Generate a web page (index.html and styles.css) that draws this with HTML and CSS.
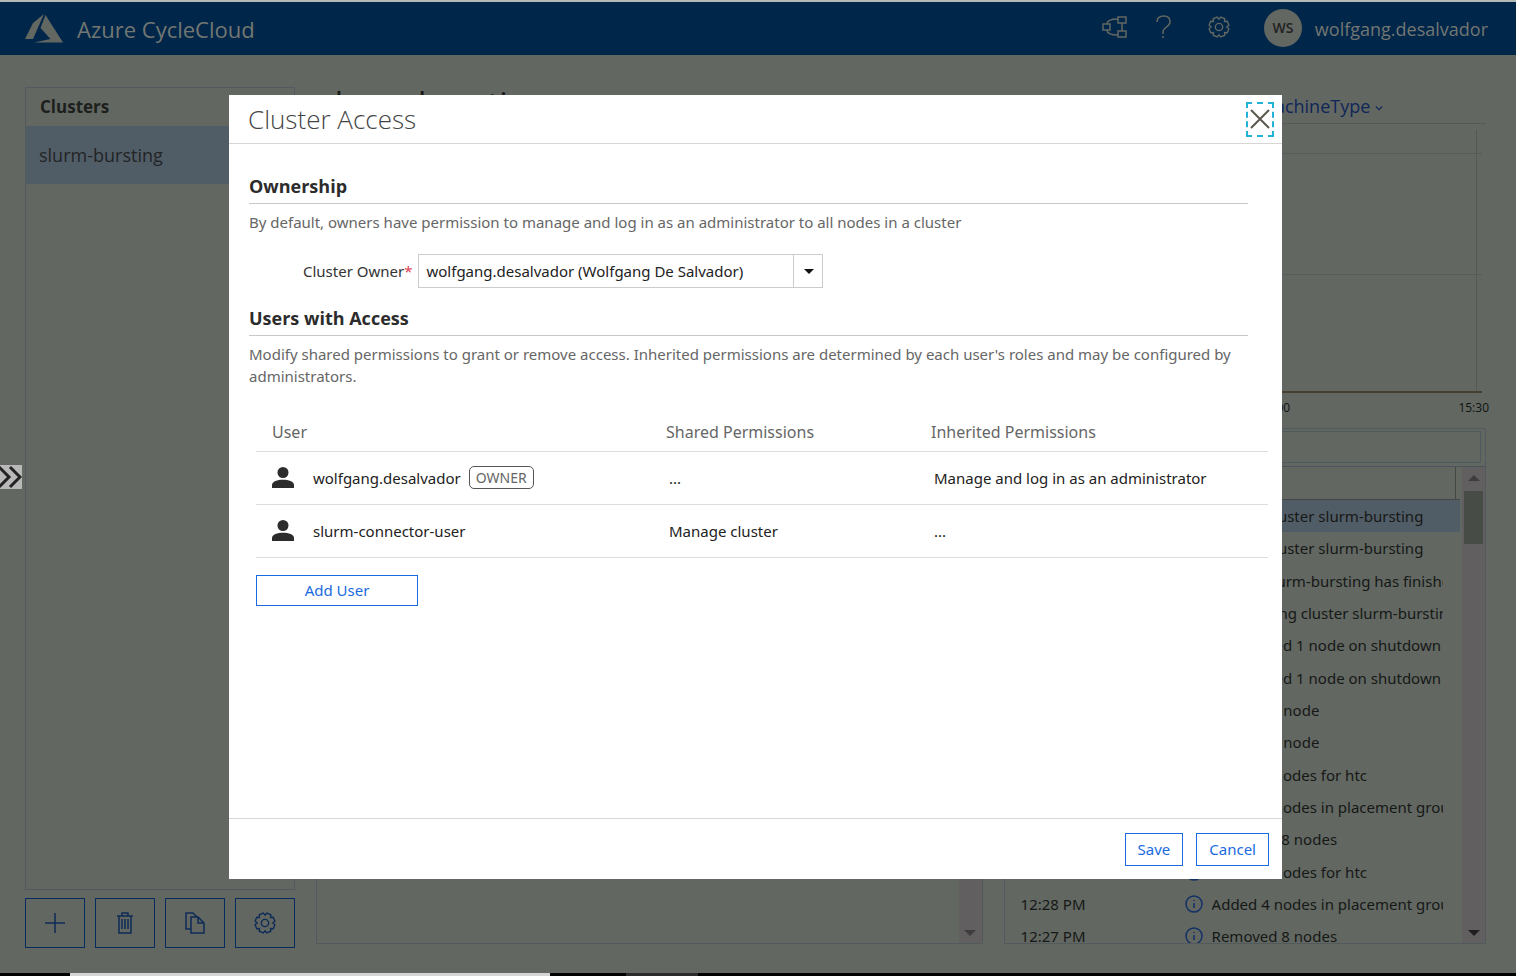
FILE: index.html
```html
<!DOCTYPE html>
<html lang="en">
<head>
<meta charset="utf-8">
<title>Azure CycleCloud</title>
<link rel="stylesheet" href="styles.css">
</head>
<body>
<div class="page">
  <header class="topbar">
    <svg class="logo" viewBox="0 0 38 30" aria-hidden="true"><path d="M19 0 8 9 0 25h8zM20.500 1 15.500 14l10 11L9 28.500h29z"/></svg>
    <span class="brand">Azure CycleCloud</span>
    <nav class="tools">
      <button class="tool" aria-label="Network"><svg viewBox="0 0 25 22" width="25" height="22"><path d="M1 8h7v6H1zM16 1h8v6h-8zM16 15h8v6h-8zM5 8c0-3 3-5 11-5M5 14c0 3 3 5 11 5M20 7v8"/></svg></button>
      <button class="tool" aria-label="Help"><svg viewBox="0 0 16 24" width="16" height="24"><path d="M1 7c0-4 3-6 7-6s6 2 6 6c0 5-7 5-7 10v2M7 21v2"/></svg></button>
      <button class="tool gear" aria-label="Settings"><svg viewBox="0 0 24 24" width="22" height="22"><use href="#gear"/></svg></button>
    </nav>
    <span class="avatar">WS</span>
    <a class="account" href="#">wolfgang.desalvador</a>
  </header>

  <main class="content">
    <section class="clusters">
      <div class="cluster-list">
        <h2 class="cluster-title">Clusters</h2>
        <a class="cluster-item" href="#">slurm-bursting</a>
      </div>
      <div class="cluster-actions">
        <button class="action" aria-label="Add"><svg viewBox="0 0 24 24" width="24" height="24"><path d="M12 2v20M2 12h20"/></svg></button>
        <button class="action" aria-label="Delete"><svg viewBox="0 0 24 24" width="24" height="24"><path d="M4 5h16M6 5v17h12V5M9 5V2h6v3M9 8v10M12 8v10M15 8v10"/></svg></button>
        <button class="action" aria-label="Copy"><svg viewBox="0 0 24 24" width="24" height="24"><path d="M8 18H3V2h7l4 4M8 6h7l6 6v10H8zM15 6v6h6"/></svg></button>
        <button class="action" aria-label="Settings"><svg viewBox="0 0 24 24" width="22" height="22"><use href="#gear"/></svg></button>
      </div>
    </section>

    <section class="details">
      <h1 class="details-title">slurm-bursting</h1>
      <div class="details-panel"><div class="scroll"><span class="arrow down dim"></span></div></div>
    </section>

    <section class="activity">
      <div class="chart-head"><a class="chart-link" href="#">Cores by MachineType <svg viewBox="0 0 10 6" width="8" height="6"><path d="M1 1l4 4 4-4"/></svg></a></div>
      <div class="chart"><div class="gridline"></div></div>
      <div class="chart-labels"><span>15:00</span><span>15:30</span></div>
      <div class="events">
        <div class="events-search"><input class="search" type="text" aria-label="Search events"></div>
        <div class="events-body">
          <div class="events-main">
            <div class="events-head"></div>
            <ul class="rows" id="rows"></ul>
          </div>
          <div class="scroll"><span class="arrow up dim"></span><span class="thumb"></span><span class="arrow down"></span></div>
        </div>
      </div>
    </section>
  </main>
  <div class="taskbar"><span class="task-gap"></span><span class="task-search"></span><span class="task-space"></span><span class="task-item"></span></div>
</div>

<button class="expander" aria-label="Expand"><svg viewBox="0 0 22 24" width="22" height="24"><path d="M-1 2l10 10-10 10M10 2l10 10-10 10"/></svg></button>

<div class="overlay">
  <div class="modal" role="dialog" aria-labelledby="dialog-title">
    <div class="modal-head">
      <h2 class="modal-title" id="dialog-title">Cluster Access</h2>
      <button class="close" aria-label="Close"><svg viewBox="0 0 20 20" width="20" height="20"><path d="M1 1l18 18M19 1L1 19"/></svg></button>
    </div>
    <div class="modal-body">
      <h3 class="section-title">Ownership</h3>
      <p class="hint">By default, owners have permission to manage and log in as an administrator to all nodes in a cluster</p>
      <div class="field">
        <label class="label" for="owner">Cluster Owner<span class="required">*</span></label>
        <div class="select-box">
          <select class="select" id="owner"><option>wolfgang.desalvador (Wolfgang De Salvador)</option></select>
          <span class="select-arrow"></span>
        </div>
      </div>
      <h3 class="section-title">Users with Access</h3>
      <p class="hint">Modify shared permissions to grant or remove access. Inherited permissions are determined by each user's roles and may be configured by administrators.</p>
      <table class="users">
        <thead><tr><th class="col-user">User</th><th class="col-shared">Shared Permissions</th><th>Inherited Permissions</th></tr></thead>
        <tbody>
          <tr><td><div class="user"><svg class="person" viewBox="0 0 22 22"><circle cx="11" cy="5.500" r="5.500"/><path d="M0 21v-3c0-7 22-7 22 0v3z"/></svg>wolfgang.desalvador<span class="badge">OWNER</span></div></td><td>...</td><td>Manage and log in as an administrator</td></tr>
          <tr><td><div class="user"><svg class="person" viewBox="0 0 22 22"><circle cx="11" cy="5.500" r="5.500"/><path d="M0 21v-3c0-7 22-7 22 0v3z"/></svg>slurm-connector-user</div></td><td>Manage cluster</td><td>...</td></tr>
        </tbody>
      </table>
      <button class="button add">Add User</button>
    </div>
    <div class="modal-foot">
      <button class="button">Save</button>
      <button class="button">Cancel</button>
    </div>
  </div>
</div>

<svg class="symbols" aria-hidden="true"><symbol id="gear" viewBox="0 0 24 24"><path d="M12 3.500 13.900 1.200 18.300 3 18 6 21 5.700 22.800 10.100 20.500 12 22.800 13.900 21 18.300 18 18 18.300 21 13.900 22.800 12 20.500 10.100 22.800 5.700 21 6 18 3 18.300 1.200 13.900 3.500 12 1.200 10.100 3 5.700 6 6 5.700 3 10.100 1.200z"/><circle cx="12" cy="12" r="4"/></symbol></svg>
<script src="app.js"></script>
</body>
</html>
```
FILE: styles.css
```css
* { box-sizing: border-box; }
body { margin: 0; font: 15px/22px "Noto Sans", "Open Sans", sans-serif; color: #333; }
h1, h2, h3, p, ul { margin: 0; padding: 0; }
button { font: inherit; background: none; border: 0; padding: 0; }
a { text-decoration: none; color: inherit; }
svg { fill: none; stroke: currentColor; stroke-width: 1.5; display: block; }
.symbols { position: absolute; width: 0; height: 0; }

.page { height: 100vh; display: flex; flex-direction: column; background: #626762; border-top: 2px solid #b4b9b4; overflow: hidden; font-family: "Open Sans", "Noto Sans", sans-serif; }
.topbar { height: 53px; flex: none; display: flex; align-items: center; padding: 0 28px 0 25px; background: #00264a; color: #727772; }
.logo { width: 38px; height: 30px; fill: #626762; stroke: none; }
.brand { font-size: 22px; margin-left: 14px; }
.tools { display: flex; align-items: center; gap: 29px; margin-left: auto; padding-bottom: 3px; }
.tool { color: #626762; }
.gear { margin-left: 7px; }
.avatar { width: 38px; height: 38px; border-radius: 50%; background: #626762; color: #222; font-size: 14px; font-weight: 600; line-height: 38px; text-align: center; margin: 0 13px 2px 34px; }
.account { font-size: 18px; }

.content { flex: 1; min-height: 0; display: grid; grid-template-columns: 270px minmax(0, 666fr) minmax(0, 482fr); gap: 21px; padding: 32px 30px 0 25px; }
.clusters { display: flex; flex-direction: column; gap: 8px; padding-bottom: 25px; }
.cluster-list { flex: 1; border: 1px solid #535a5d; }
.cluster-title { font-size: 17px; line-height: 38px; padding-left: 14px; color: #1d1f1d; }
.cluster-item { display: block; font-size: 18px; line-height: 58px; padding-left: 13px; background: #515d66; color: #222426; }
.cluster-actions { display: flex; justify-content: space-between; }
.action { width: 60px; height: 50px; border: 1px solid #062b60; color: #0e2b58; display: grid; place-items: center; }

.details { display: flex; flex-direction: column; padding-bottom: 29px; min-height: 0; }
.details-title { font-size: 33px; font-weight: 400; line-height: 34px; height: 38px; padding-left: 3px; color: #181a18; }
.details-panel { flex: 1; margin-top: 40px; border: 1px solid #535a5d; display: flex; justify-content: flex-end; }
.scroll { width: 23px; flex: none; background: #625f60; display: flex; flex-direction: column; align-items: center; padding: 8px 0 7px; }
.arrow { border: 6px solid transparent; }
.up { border-top: 0; border-bottom-color: #202020; }
.down { border-bottom: 0; border-top-color: #202020; margin-top: auto; }
.dim.up { border-bottom-color: #3d3d3d; }
.dim.down { border-top-color: #3d3d3d; }
.thumb { width: 19px; height: 53px; margin-top: 10px; background: #474c47; }

.activity { display: flex; flex-direction: column; min-height: 0; padding-bottom: 29px; }
.chart-head { height: 37px; line-height: 38px; font-size: 18px; border-bottom: 1px solid #555855; color: #0f2658; padding-right: 103px; text-align: right; }
.chart-link svg { display: inline-block; vertical-align: middle; }
.chart { height: 263px; margin: 6px 4px 0 0; border-bottom: 2px solid #45402f; padding: 23px 0 116px; background: linear-gradient(#555855, #555855) right 5px top / 1px 100% no-repeat; }
.gridline { height: 100%; border: solid #585c58; border-width: 1px 0; }
.chart-labels { display: flex; justify-content: space-between; font-size: 12px; line-height: 30px; height: 35px; padding: 0 0 0 256px; margin-right: -3px; color: #101210; }
.events { flex: 1; min-height: 0; display: flex; flex-direction: column; border: 1px solid #535a5d; }
.events-search { padding: 2px 4px 3px; border-bottom: 1px solid #4b545c; }
.search { display: block; width: 100%; height: 32px; background: none; border: 1px solid #505b60; }
.events-body { flex: 1; min-height: 0; display: flex; overflow: hidden; }
.events-main { flex: 1; min-width: 0; }
.events-head { height: 33px; border-bottom: 1px solid #454745; margin-right: 2px; background: linear-gradient(#454745, #454745) right 4px top / 1px 100% no-repeat; }
.rows { list-style: none; font-family: "Noto Sans", "Open Sans", sans-serif; font-size: 15px; color: #161816; }
.row { height: 32px; display: flex; align-items: center; margin-right: 2px; padding: 0 17px 0 16px; white-space: nowrap; }
.row:nth-child(3n) { height: 33px; }
.row:first-child { background: #515d66; }
.time { width: 164px; flex: none; }
.info { width: 18px; height: 18px; flex: none; margin-right: 9px; color: #122f68; }
.message { flex: 1; min-width: 0; overflow: hidden; }
.taskbar { height: 3px; flex: none; display: flex; background: #000; }
.task-gap { width: 70px; }
.task-search { width: 480px; background: #d5d5d5; }
.task-space { width: 76px; }
.task-item { width: 72px; background: #2c2a2a; }

.expander { position: fixed; left: 0; top: 465px; width: 22px; height: 24px; background: #b8b8b8; color: #222; }
.expander svg { stroke-width: 3; }

.overlay { position: fixed; inset: 0; display: flex; padding: 95px 234px 97px 229px; }
.modal { flex: 1; min-width: 0; display: flex; flex-direction: column; background: #fff; }
.modal-head { display: flex; justify-content: space-between; align-items: center; height: 49px; padding: 0 8px 0 19px; border-bottom: 1px solid #d6d6d6; }
.modal-title { font-family: "Open Sans", "Noto Sans", sans-serif; font-size: 26px; font-weight: 300; line-height: 48px; color: #444; }
.close { width: 28px; height: 35px; border: 2px dashed #21b2d6; display: grid; place-items: center; color: #5c5650; }
.close svg { stroke-width: 2; }
.modal-body { flex: 1; padding: 29px 14px 0 20px; }
.section-title { font-family: "Open Sans", "Noto Sans", sans-serif; font-size: 18px; line-height: 26px; height: 31px; border-bottom: 1px solid #c8c8c8; margin-right: 20px; color: #2c2c2c; }
.hint { margin: 7px 20px 0 0; color: #666; }
.field { display: flex; align-items: center; gap: 6px; margin: 21px 0 17px 54px; }
.required { color: #e04050; }
.select-box { position: relative; width: 405px; }
.select { appearance: none; width: 100%; height: 34px; border: 1px solid #ccc; border-radius: 0; background: #fff; padding: 0 36px 0 7px; font: inherit; color: #222; }
.select-arrow { position: absolute; right: 0; top: 1px; width: 30px; height: 32px; border-left: 1px solid #ccc; pointer-events: none; display: grid; place-items: center; }
.select-arrow::after { content: ""; border: 5px solid transparent; border-top-color: #111; border-bottom: 0; }
.users { width: calc(100% - 7px); margin: 21px 0 17px 7px; border-collapse: collapse; table-layout: fixed; }
.users th { height: 43px; padding: 5px 0 0 16px; text-align: left; font-weight: 400; font-size: 16px; color: #666; border-bottom: 1px solid #ddd; }
.users td { height: 53px; padding: 0 0 0 19px; border-bottom: 1px solid #ddd; color: #222; }
.users td:first-child { padding-left: 16px; }
.col-user { width: 394px; }
.col-shared { width: 265px; }
.user { display: flex; align-items: center; }
.person { width: 22px; height: 22px; fill: #2c2c2c; stroke: none; margin-right: 19px; }
.badge { margin-left: 8px; padding: 0 6px; border: 1px solid #555; border-radius: 5px; font-size: 14px; line-height: 21px; color: #666; }
.button { border: 1px solid #1a6be0; height: 33px; padding: 0 12px; color: #1a6be0; }
.add { width: 162px; height: 31px; margin-left: 7px; display: block; }
.modal-foot { height: 61px; border-top: 1px solid #d6d6d6; display: flex; justify-content: flex-end; align-items: center; gap: 13px; padding-right: 13px; }
```
FILE: app.js
```js
const events = [
  ["12:43 PM", "Started cluster slurm-bursting"],
  ["12:43 PM", "Started cluster slurm-bursting"],
  ["12:42 PM", "Cluster slurm-bursting has finished"],
  ["12:40 PM", "Terminating cluster slurm-bursting"],
  ["12:38 PM", "Terminated 1 node on shutdown"],
  ["12:38 PM", "Terminated 1 node on shutdown"],
  ["12:36 PM", "Created 1 node"],
  ["12:35 PM", "Created 1 node"],
  ["12:33 PM", "Added 4 nodes for htc"],
  ["12:32 PM", "Added 4 nodes in placement group"],
  ["12:31 PM", "Removed 8 nodes"],
  ["12:29 PM", "Added 4 nodes for htc"],
  ["12:28 PM", "Added 4 nodes in placement group"],
  ["12:27 PM", "Removed 8 nodes"]
];
const icon = '<svg class="info" viewBox="0 0 18 18"><circle cx="9" cy="9" r="8"/><path d="M9 8v5M9 5v1"/></svg>';
document.getElementById("rows").innerHTML = events
  .map(([time, text]) => `<li class="row"><span class="time">${time}</span>${icon}<span class="message">${text}</span></li>`)
  .join("");
```
